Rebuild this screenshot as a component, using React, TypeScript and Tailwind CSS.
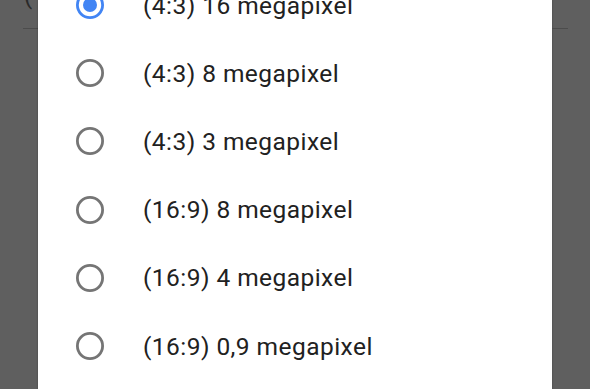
import React from 'react';

const OPTIONS = [
  '(4:3) 16 megapixel',
  '(4:3) 8 megapixel',
  '(4:3) 3 megapixel',
  '(16:9) 8 megapixel',
  '(16:9) 4 megapixel',
  '(16:9) 0,9 megapixel',
];

const Radio: React.FC<{ checked: boolean }> = ({ checked }) => (
  <svg width="28" height="28" viewBox="0 0 28 28" className="shrink-0">
    <circle cx="14" cy="14" r="12.6" fill="none" stroke={checked ? '#4285f4' : '#757575'} strokeWidth="2.8" />
    {checked && <circle cx="14" cy="14" r="7" fill="#4285f4" />}
  </svg>
);

const App: React.FC = () => {
  return (
    <div className="flex h-[389px] w-[590px] overflow-hidden bg-[#5f5f5f] font-['Roboto',sans-serif]">
      {/* page behind the dialog, left side */}
      <div className="w-[38px] shrink-0 flex flex-col">
        <div className="h-[28px] overflow-hidden pl-[24px]">
          <span className="block -mt-[18px] text-[24px] leading-[28px] text-[#2a2a2a]">(4</span>
        </div>
        <div className="ml-[23px] h-px bg-[#4c4c4c]" />
      </div>

      {/* dialog */}
      <div className="flex-1 bg-white shadow-[0_0_2px_rgba(0,0,0,0.3)]">
        <ul className="-mt-[29px]">
          {OPTIONS.map((label, i) => (
            <li key={label} className="flex h-[68.2px] items-center">
              <div className="ml-[38px]">
                <Radio checked={i === 0} />
              </div>
              <span className="ml-[39px] mt-[2px] text-[24.5px] tracking-[0.45px] text-[#212121]">{label}</span>
            </li>
          ))}
        </ul>
      </div>

      {/* page behind the dialog, right side */}
      <div className="w-[38px] shrink-0 flex flex-col">
        <div className="h-[28px]" />
        <div className="mr-[22px] h-px bg-[#4c4c4c]" />
      </div>
    </div>
  );
};

export default App;
